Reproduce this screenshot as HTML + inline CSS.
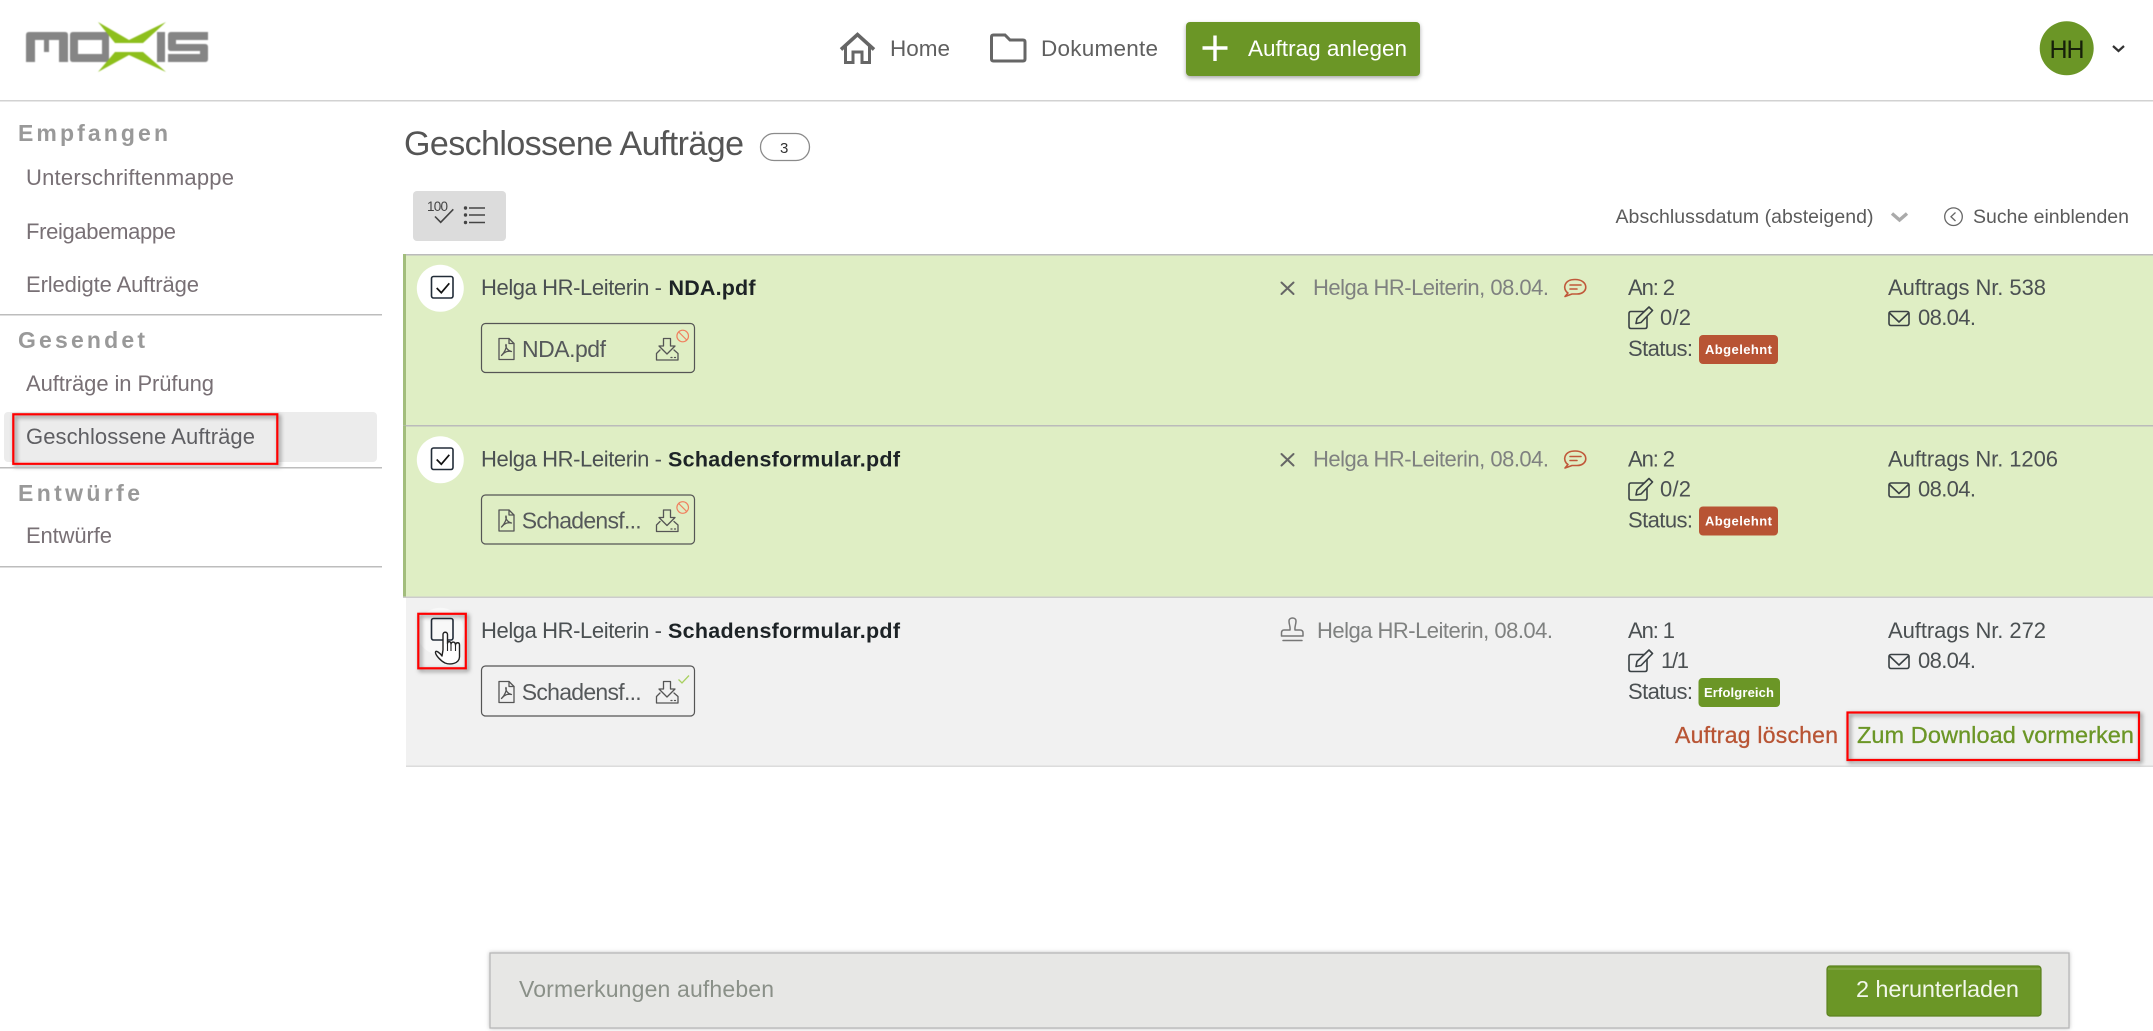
<!DOCTYPE html>
<html lang="de">
<head>
<meta charset="utf-8">
<title>Geschlossene Aufträge</title>
<style>
html,body{margin:0;padding:0;background:#fff;width:2153px;height:1031px;overflow:hidden}
svg{display:block}
text{font-family:"Liberation Sans",sans-serif;font-size:22px;fill:#55595a}
.nav{font-size:22.5px;fill:#5f5f5f}
.side{font-size:22px;fill:#787075}
.head{font-size:23px;font-weight:bold;fill:#999}
.row{fill:#4b5052;font-size:22px}
.b{font-weight:bold;fill:#1d2326;font-size:21.5px}
.muted{fill:#7f8180;font-size:22px}
.file{font-size:23px;fill:#55585a}
.badge{font-size:13px;font-weight:bold;fill:#fff}
.ic{fill:none;stroke:#555;stroke-width:1.5;stroke-linejoin:round;stroke-linecap:round}
.red{fill:none;stroke:#f00;stroke-width:2.2;filter:drop-shadow(2px 2px 2px rgba(0,0,0,.5))}
</style>
</head>
<body>
<svg width="2153" height="1031" viewBox="0 0 2153 1031" xmlns="http://www.w3.org/2000/svg">
<defs>
<g id="pdf" class="ic" style="stroke-width:1.3">
  <path d="M499 338.500H509L514 343.500V359.500H499Z"/>
  <path d="M509 338.500V343.500H514"/>
  <path d="M501.500 355.500C505 352 507 347 506 344.500C505 347 508 351 511.500 351.500C508 350.500 504 352 501.500 355.500Z"/>
</g>
<g id="dl" class="ic" style="stroke-width:1.300">
  <path d="M663.500 338.500H670.500V346H675L667 354L659 346H663.500Z"/>
  <path d="M660 350L656.500 353.500V360H678V353.500L674 350"/>
  <path d="M671 357.500H672M674.500 357.500H675.500"/>
</g>
<g id="edit" class="ic" style="stroke:#3a4144;stroke-width:1.600" transform="translate(0,-0.500)">
  <path d="M1644 312H1631Q1629 312 1629 314V327Q1629 329 1631 329H1645Q1647 329 1647 327V317"/>
  <path d="M1636 324L1637 319L1649 307.500L1652.500 311L1641 323Z"/>
</g>
<g id="env" class="ic" style="stroke:#3a4144;stroke-width:1.600" transform="translate(0,-1)">
  <rect x="1889" y="312.500" width="20" height="14" rx="2"/>
  <path d="M1889.500 314L1899 323L1908.500 314"/>
</g>
<g id="x" class="ic" style="stroke:#666;stroke-width:2">
  <path d="M1281.500 282.500L1293.500 294M1293.500 282.500L1281.500 294"/>
</g>
<g id="cm" class="ic" style="stroke:#c0583a;stroke-width:1.600">
  <path d="M1568 293C1562 289 1564 279.500 1575 279.500C1589 279.500 1589 294 1577 294H1572L1565 296.500Z"/>
  <path d="M1570 285H1581M1570 289H1577"/>
</g>
</defs>

<!-- header -->
<rect x="0" y="100" width="2153" height="1.500" fill="#d2d2d2"/>
<g style="filter:blur(.5px)">
  <path fill="#858585" d="M26 62V35Q26 32 29 32H65Q68 32 68 35V62H59V40H49V52H44V40H35V62Z"/>
  <path fill="#858585" fill-rule="evenodd" d="M73 32H109V62H73Q70 62 70 59V35Q70 32 73 32ZM78 40V54H102V40Z"/>
  <rect x="157" y="32" width="8" height="30" fill="#858585"/>
  <path fill="#858585" d="M171 32H208V40H176V44H205Q208 44 208 47V59Q208 62 205 62H168V54H200V51H171Q168 51 168 48V35Q168 32 171 32Z"/>
  <path fill="#8dbf1c" d="M98 22L129 40L166 22L143 43H115Z"/>
  <path fill="#8dbf1c" d="M115 52H143L166 72L129 55L98 72Z"/>
</g>

<path d="M841 49.500L857.500 34.500L874 49.500" fill="none" stroke="#666" stroke-width="3.600"/>
<path d="M845.500 46V62.500H853V52H862V62.500H869.500V46" fill="none" stroke="#666" stroke-width="3"/>
<text class="nav" x="890" y="56" textLength="60">Home</text>
<path d="M991.500 58V37Q991.500 35 993.500 35H1005L1010 40H1023Q1025 40 1025 42V59Q1025 61 1023 61H993.500Q991.500 61 991.500 59Z" fill="none" stroke="#666" stroke-width="3"/>
<text class="nav" x="1041" y="56" textLength="117">Dokumente</text>
<rect x="1186" y="22" width="234" height="54" rx="4" fill="#6b9626" style="filter:drop-shadow(0 2px 2px rgba(0,0,0,.35))"/>
<path d="M1202.500 48H1227.500M1215 35.500V61" stroke="#fff" stroke-width="3.400" fill="none"/>
<text x="1248" y="56" textLength="159" style="fill:#fff;font-size:22.500px">Auftrag anlegen</text>

<circle cx="2066.700" cy="48.300" r="27" fill="#6b9626"/>
<text x="2049.500" y="58" textLength="35" style="font-size:25px;fill:#16200a">HH</text>
<path d="M2113 46L2118.500 51L2124 46" fill="none" stroke="#333" stroke-width="2.200"/>

<!-- sidebar -->
<text class="head" x="18" y="141" textLength="150">Empfangen</text>
<text class="side" x="26" y="185" textLength="208">Unterschriftenmappe</text>
<text class="side" x="26" y="239" textLength="150">Freigabemappe</text>
<text class="side" x="26" y="292" textLength="173">Erledigte Aufträge</text>
<rect x="0" y="314" width="382" height="1.500" fill="#bdbdbd"/>
<text class="head" x="18" y="348" textLength="127">Gesendet</text>
<text class="side" x="26" y="391" textLength="188">Aufträge in Prüfung</text>
<rect x="4" y="412" width="373" height="50" rx="4" fill="#ececec"/>
<text class="side" x="26" y="444" textLength="229" style="fill:#5e5e62">Geschlossene Aufträge</text>
<rect class="red" x="13.300" y="414.300" width="264" height="49.500"/>
<rect x="0" y="467" width="382" height="1.500" fill="#bdbdbd"/>
<text class="head" x="18" y="501" textLength="122">Entwürfe</text>
<text class="side" x="26" y="543" textLength="86">Entwürfe</text>
<rect x="0" y="566" width="382" height="1.500" fill="#bdbdbd"/>

<!-- title -->
<text x="404" y="155" textLength="340" style="font-size:34px;fill:#555">Geschlossene Aufträge</text>
<rect x="760.500" y="133.500" width="49" height="27" rx="13.500" fill="#fff" stroke="#8b8b8b" stroke-width="1.300"/>
<text x="780" y="153" style="font-size:15px;fill:#333">3</text>

<!-- toolbar -->
<rect x="413" y="191" width="93" height="50" rx="4" fill="#dcdcdc"/>
<text x="427" y="211" textLength="21" style="font-size:13.500px;fill:#444">100</text>
<path d="M435 216.500L440.700 222.300L453.300 209.300" fill="none" stroke="#444" stroke-width="1.600"/>
<g fill="#444"><circle cx="465.500" cy="208" r="1.700"/><circle cx="465.500" cy="215" r="1.700"/><circle cx="465.500" cy="222.500" r="1.700"/></g>
<path d="M469 208H485M469 215H485M469 222.500H485" stroke="#444" stroke-width="1.500" fill="none"/>

<text x="1615.500" y="223" textLength="258" style="font-size:19.500px;fill:#5b5b5b">Abschlussdatum (absteigend)</text>
<path d="M1892 213.500L1899.500 220L1907 213.500" fill="none" stroke="#aaa" stroke-width="3.400"/>
<circle cx="1953.500" cy="216.700" r="8.800" fill="none" stroke="#666" stroke-width="1.300"/>
<path d="M1955.500 212.500L1951 216.700L1955.500 221" fill="none" stroke="#666" stroke-width="1.300"/>
<text x="1973" y="223" textLength="156" style="font-size:19.500px;fill:#5b5b5b">Suche einblenden</text>

<!-- row 1 -->
<rect x="403" y="254" width="1750" height="171" fill="#dfeec4"/>
<rect x="403" y="254" width="1750" height="1.500" fill="#bbb"/>
<rect x="403" y="254" width="3" height="171" fill="#a2bd7c"/>
<circle cx="440.300" cy="288.300" r="23.500" fill="#fff"/>
<rect x="431.500" y="276.500" width="21.500" height="21.500" rx="2" fill="#fff" stroke="#222c38" stroke-width="1.600"/>
<path d="M436.700 288L441.300 292.700L449.300 283.300" fill="none" stroke="#111" stroke-width="1.700"/>
<text class="row" x="481" y="295" textLength="181">Helga HR-Leiterin -</text>
<text class="b" x="668.500" y="295" textLength="87">NDA.pdf</text>
<rect x="481.500" y="323.500" width="213" height="49" rx="4" fill="none" stroke="#555" stroke-width="1.200"/>
<use href="#pdf"/>
<text class="file" x="522" y="357" textLength="84">NDA.pdf</text>
<use href="#dl"/>
<circle cx="682.700" cy="336" r="5.800" fill="none" stroke="#f0805f" stroke-width="1.200"/>
<path d="M678.700 332L686.700 340" stroke="#f0805f" stroke-width="1.200"/>
<use href="#x"/>
<text class="muted" x="1313" y="295" textLength="236">Helga HR-Leiterin, 08.04.</text>
<use href="#cm"/>
<text class="row" x="1628" y="295" textLength="47">An: 2</text>
<use href="#edit"/>
<text class="row" x="1660" y="325" textLength="31">0/2</text>
<text class="row" x="1628" y="356" textLength="65">Status:</text>
<rect x="1699" y="335" width="79" height="29" rx="4" fill="#b85434"/>
<text class="badge" x="1705" y="354" textLength="67">Abgelehnt</text>
<text class="row" x="1888" y="295" textLength="158">Auftrags Nr. 538</text>
<use href="#env"/>
<text class="row" x="1918" y="325" textLength="58">08.04.</text>

<!-- row 2 -->
<rect x="403" y="425.500" width="1750" height="171.500" fill="#dfeec4"/>
<rect x="403" y="425" width="1750" height="1.500" fill="#bbb"/>
<rect x="403" y="425.500" width="3" height="171.500" fill="#a2bd7c"/>
<g transform="translate(0,171.500)">
  <circle cx="440.300" cy="288.300" r="23.500" fill="#fff"/>
  <rect x="431.500" y="276.500" width="21.500" height="21.500" rx="2" fill="#fff" stroke="#222c38" stroke-width="1.600"/>
  <path d="M436.700 288L441.300 292.700L449.300 283.300" fill="none" stroke="#111" stroke-width="1.700"/>
  <text class="row" x="481" y="295" textLength="181">Helga HR-Leiterin -</text>
  <text class="b" x="668" y="295" textLength="232">Schadensformular.pdf</text>
  <rect x="481.500" y="323.500" width="213" height="49" rx="4" fill="none" stroke="#555" stroke-width="1.200"/>
  <use href="#pdf"/>
  <text class="file" x="521.700" y="357" textLength="120">Schadensf...</text>
  <use href="#dl"/>
  <circle cx="682.700" cy="336" r="5.800" fill="none" stroke="#f0805f" stroke-width="1.200"/>
  <path d="M678.700 332L686.700 340" stroke="#f0805f" stroke-width="1.200"/>
  <use href="#x"/>
  <text class="muted" x="1313" y="295" textLength="236">Helga HR-Leiterin, 08.04.</text>
  <use href="#cm"/>
  <text class="row" x="1628" y="295" textLength="47">An: 2</text>
  <use href="#edit"/>
  <text class="row" x="1660" y="325" textLength="31">0/2</text>
  <text class="row" x="1628" y="356" textLength="65">Status:</text>
  <rect x="1699" y="335" width="79" height="29" rx="4" fill="#b85434"/>
  <text class="badge" x="1705" y="354" textLength="67">Abgelehnt</text>
  <text class="row" x="1888" y="295" textLength="170">Auftrags Nr. 1206</text>
  <use href="#env"/>
  <text class="row" x="1918" y="325" textLength="58">08.04.</text>
</g>

<!-- row 3 -->
<rect x="406" y="597" width="1747" height="169" fill="#f1f1f1"/>
<rect x="403" y="596.500" width="1750" height="1.500" fill="#ccc"/>
<rect x="406" y="765.500" width="1747" height="1.500" fill="#dcdcdc"/>
<g transform="translate(0,343)">
  <circle cx="440.300" cy="288.300" r="23.500" fill="#f8f8f8"/>
  <rect x="431.500" y="275.500" width="21.500" height="21.500" rx="2" fill="#f8f8f8" stroke="#222c38" stroke-width="1.600"/>
  <text class="row" x="481" y="295" textLength="181">Helga HR-Leiterin -</text>
  <text class="b" x="668" y="295" textLength="232">Schadensformular.pdf</text>
  <rect x="481.500" y="323" width="213" height="50" rx="4" fill="none" stroke="#555" stroke-width="1.200"/>
  <use href="#pdf"/>
  <text class="file" x="521.700" y="357" textLength="120">Schadensf...</text>
  <use href="#dl"/>
  <path d="M678.500 336.500L682 340L689 332.500" fill="none" stroke="#a8d060" stroke-width="1.300"/>
  <g class="ic" style="stroke:#777;stroke-width:1.500">
    <path d="M1289 278C1289 274 1296 274 1296 278C1296 282 1294.500 283 1295 287H1300Q1303 287 1303 290V293H1281.500V290Q1281.500 287 1284 287H1290C1290.500 283 1289 282 1289 278Z"/>
    <path d="M1283 297.500H1302"/>
  </g>
  <text class="muted" x="1317" y="295" textLength="236">Helga HR-Leiterin, 08.04.</text>
  <text class="row" x="1628" y="295" textLength="47">An: 1</text>
  <use href="#edit"/>
  <text class="row" x="1661" y="325" textLength="28">1/1</text>
  <text class="row" x="1628" y="356" textLength="65">Status:</text>
  <rect x="1698.500" y="335" width="81.500" height="29" rx="4" fill="#6b9626"/>
  <text class="badge" x="1704" y="354" textLength="70">Erfolgreich</text>
  <text class="row" x="1888" y="295" textLength="158">Auftrags Nr. 272</text>
  <use href="#env"/>
  <text class="row" x="1918" y="325" textLength="58">08.04.</text>
</g>
<path d="M442 656C440 653 436 650 435.500 652C435 655 441 661 445 663C450 665 459 664 459.500 657V645C459.500 642 456 642 455.500 645C455.500 641.500 451.500 641 451 644C451 641 447.500 641 447.500 643.500V634.500C447.500 631.500 443 631.500 443 634.500V650Z" fill="#fff" stroke="#222" stroke-width="1.400" stroke-linejoin="round"/>
<path d="M447.500 643.500V651M451 644V651M455.500 645V651" fill="none" stroke="#222" stroke-width="1.100"/>
<rect class="red" x="418.300" y="613.800" width="47.500" height="54.500"/>
<text x="1675" y="743" textLength="163" style="fill:#b85434;font-size:23px;stroke:#b85434;stroke-width:.3">Auftrag löschen</text>
<text x="1857" y="743" textLength="277" style="fill:#6b9626;font-size:23.500px;stroke:#6b9626;stroke-width:.3">Zum Download vormerken</text>
<rect class="red" x="1847.500" y="712.500" width="291.500" height="47.500"/>

<!-- bottom bar -->
<rect x="490" y="953" width="1579" height="75" fill="#e7e7e5" stroke="#b5b5b5" stroke-width="1.200" style="filter:drop-shadow(0 0 2px rgba(0,0,0,.25))"/>
<text x="519" y="997" textLength="255" style="font-size:23px;fill:#8a9088">Vormerkungen aufheben</text>
<rect x="1827" y="966" width="214" height="50" rx="3" fill="#6b9626" stroke="#5c8220" stroke-width="1.200"/>
<rect x="1828" y="968" width="212" height="2" fill="#7da23f"/>
<text x="1856" y="997" textLength="163" style="font-size:23.500px;fill:#f2f7ea">2 herunterladen</text>
</svg>
</body>
</html>
